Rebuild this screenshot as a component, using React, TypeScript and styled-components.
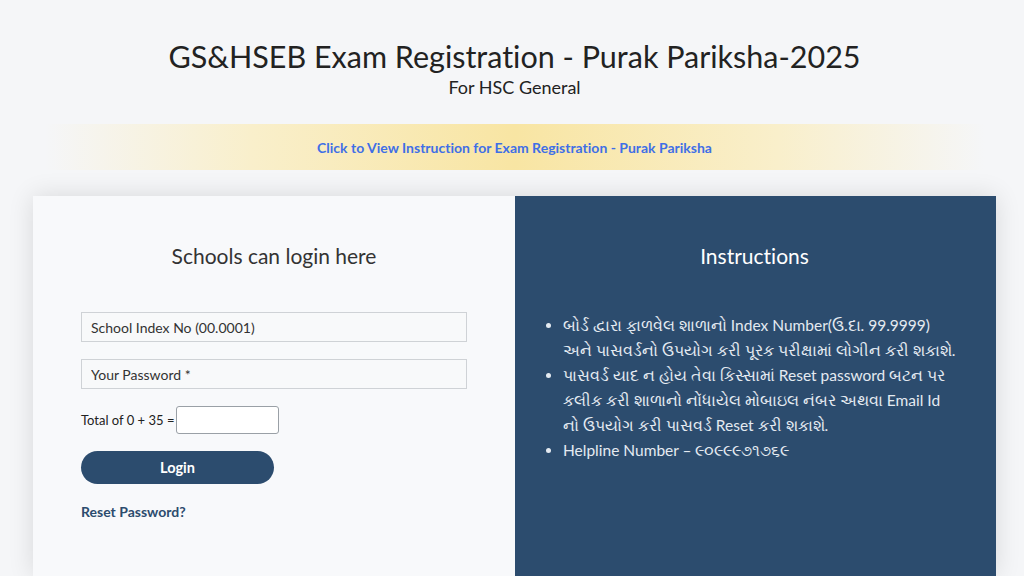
import React from 'react';
import styled, { createGlobalStyle } from 'styled-components';

const GlobalStyle = createGlobalStyle`
  html, body {
    margin: 0;
    padding: 0;
    background: #f5f6f8;
    font-family: Lato, 'Noto Sans', sans-serif;
    font-variant-ligatures: none;
    overflow: hidden;
  }
  * { box-sizing: border-box; }
`;

const Page = styled.div`
  height: 576px;
  padding-left: 5px;
  display: flex;
  flex-direction: column;
  align-items: center;
`;

const Header = styled.header`
  padding-top: 36px;
  text-align: center;
  color: #222;
`;

const Title = styled.h1`
  margin: 0;
  font-size: 30.5px;
  font-weight: 400;
  line-height: 40px;
`;

const Subtitle = styled.div`
  font-size: 18px;
  line-height: 24px;
  margin-top: -1px;
`;

const Banner = styled.a`
  display: flex;
  align-items: center;
  justify-content: center;
  width: 940px;
  height: 46px;
  margin-top: 25px;
  background: linear-gradient(
    to right,
    rgba(249, 240, 212, 0) 0%,
    #f9efcb 22%,
    #f8e5a3 50%,
    #f9efcb 78%,
    rgba(249, 240, 212, 0) 100%
  );
  color: #3f6fe6;
  font-size: 14px;
  font-weight: 700;
  text-decoration: none;
`;

const Card = styled.div`
  width: 963px;
  margin-top: 26px;
  flex: 1;
  display: grid;
  grid-template-columns: 482px 481px;
  box-shadow: 0 0 24px rgba(0, 0, 0, 0.12);
`;

const LoginPane = styled.section`
  background: #f8f9fb;
  padding: 46px 48px 0 48px;
`;

const InfoPane = styled.section`
  background: #2c4c6e;
  padding: 46px 24px 0 22px;
  color: #e4eaf1;
`;

const PaneTitle = styled.h2<{ $light?: boolean }>`
  margin: 0;
  text-align: center;
  font-size: 21px;
  font-weight: 400;
  line-height: 28px;
  color: ${p => (p.$light ? '#ffffff' : '#333')};
`;

const Form = styled.form`
  margin-top: 42px;
  display: flex;
  flex-direction: column;
`;

const TextInput = styled.input`
  width: 386px;
  height: 30px;
  border: 1px solid #cfd2d6;
  background: #f8f9fa;
  padding: 0 9px;
  font-family: inherit;
  font-size: 14px;
  color: #333;
  margin-bottom: 17px;
  &::placeholder { color: #333; }
`;

const CaptchaRow = styled.label`
  display: flex;
  align-items: center;
  gap: 2px;
  font-size: 13px;
  color: #222;
`;

const CaptchaInput = styled.input`
  width: 103px;
  height: 28px;
  border: 1px solid #9aa0a6;
  border-radius: 3px;
  background: #fff;
`;

const LoginButton = styled.button`
  margin-top: 17px;
  width: 193px;
  height: 33px;
  border: none;
  border-radius: 17px;
  background: #2c4c6e;
  color: #fff;
  font-family: inherit;
  font-size: 14.5px;
  font-weight: 700;
`;

const ResetLink = styled.a`
  margin-top: 19px;
  color: #2c4c6e;
  font-size: 14px;
  font-weight: 700;
  text-decoration: none;
`;

const List = styled.ul`
  margin: 43px 0 0 0;
  padding-left: 26px;
  font-size: 15.5px;
  line-height: 25px;
  white-space: nowrap;
`;

const Item = styled.li`
  margin: 0;
`;

const App: React.FC = () => (
  <>
    <GlobalStyle />
    <Page>
      <Header>
        <Title>GS&amp;HSEB Exam Registration - Purak Pariksha-2025</Title>
        <Subtitle>For HSC General</Subtitle>
      </Header>
      <Banner href="#">Click to View Instruction for Exam Registration - Purak Pariksha</Banner>
      <Card>
        <LoginPane>
          <PaneTitle>Schools can login here</PaneTitle>
          <Form onSubmit={e => e.preventDefault()}>
            <TextInput placeholder="School Index No (00.0001)" />
            <TextInput type="password" placeholder="Your Password *" />
            <CaptchaRow>
              Total of 0 + 35 =
              <CaptchaInput />
            </CaptchaRow>
            <LoginButton type="submit">Login</LoginButton>
            <ResetLink href="#">Reset Password?</ResetLink>
          </Form>
        </LoginPane>
        <InfoPane>
          <PaneTitle $light>Instructions</PaneTitle>
          <List>
            <Item>
              બોર્ડ દ્વારા ફાળવેલ શાળાનો Index Number(ઉ.દા. 99.9999)
              <br />
              અને પાસવર્ડનો ઉપયોગ કરી પૂરક પરીક્ષામાં લોગીન કરી શકાશે.
            </Item>
            <Item>
              પાસવર્ડ યાદ ન હોય તેવા કિસ્સામાં Reset password બટન પર
              <br />
              કલીક કરી શાળાનો નોંધાયેલ મોબાઇલ નંબર અથવા Email Id
              <br />
              નો ઉપયોગ કરી પાસવર્ડ Reset કરી શકાશે.
            </Item>
            <Item>Helpline Number – ૯૦૯૯૯૭૧૭૬૯</Item>
          </List>
        </InfoPane>
      </Card>
    </Page>
  </>
);

export default App;
